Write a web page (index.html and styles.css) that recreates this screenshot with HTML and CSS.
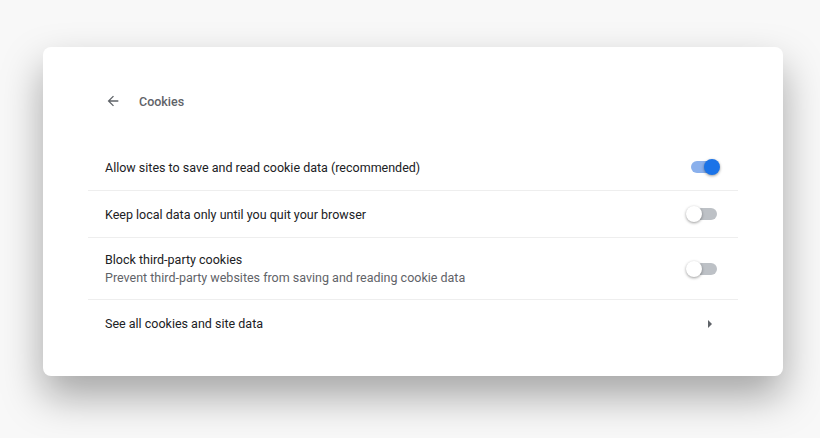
FILE: index.html
```html
<!DOCTYPE html>
<html lang="en">
<head>
    <meta charset="UTF-8">
    <title>Cookies</title>
    <link rel="stylesheet" href="styles.css">
</head>
<body>
<div class="card">
    <!--header-->
    <div class="page-title">
        <svg class="back" width="16" height="16" viewBox="0 0 24 24">
            <path d="M20 11H7.83l5.59-5.59L12 4l-8 8 8 8 1.41-1.41L7.83 13H20v-2z" fill="#5f6368"/>
        </svg>
        <span>Cookies</span>
    </div>
    <div class="settings">
        <div class="row">
            <div class="label">Allow sites to save and read cookie data (recommended)</div>
            <div class="toggle on"><span class="knob"></span></div>
        </div>
        <div class="row">
            <div class="label">Keep local data only until you quit your browser</div>
            <div class="toggle"><span class="knob"></span></div>
        </div>
        <div class="row tall">
            <div class="label">
                Block third-party cookies
                <div class="sub">Prevent third-party websites from saving and reading cookie data</div>
            </div>
            <div class="toggle"><span class="knob"></span></div>
        </div>
        <div class="row">
            <div class="label">See all cookies and site data</div>
            <span class="arrow"></span>
        </div>
    </div>
</div>
</body>
</html>
```

FILE: styles.css
```css
html {
    height: 100%;
}

body {
    margin: 0;
    min-height: 100%;
    box-sizing: border-box;
    padding: 47px 37px 62px 43px;
    background-color: #f8f8f8;
    font-family: Roboto, "Liberation Sans", sans-serif;
    font-size: 12.5px;
    color: #202124;
}

.card {
    width: 740px;
    height: 329px;
    box-sizing: border-box;
    background-color: white;
    border-radius: 8px;
    box-shadow: 0 20px 40px rgba(0, 0, 0, 0.34);
    padding: 44px 45px 0 45px;
}

.page-title {
    display: flex;
    align-items: center;
    height: 20px;
    padding-left: 17px;
    font-size: 12.5px;
    font-weight: 500;
    color: #5f6368;
}

.back {
    margin-right: 18px;
}

.settings {
    margin-top: 33px;
}

.row {
    display: flex;
    align-items: center;
    justify-content: space-between;
    box-sizing: border-box;
    height: 47px;
    padding: 0 18px 0 17px;
    border-bottom: 1px solid #eeeeee;
}

.row:last-child {
    border-bottom: none;
}

.row.tall {
    height: 62px;
}

.sub {
    margin-top: 3px;
    color: #5f6368;
}

.toggle {
    position: relative;
    width: 26px;
    height: 12px;
    border-radius: 6px;
    background-color: #bdc1c6;
    margin-right: 3px;
}

.knob {
    position: absolute;
    top: -2px;
    left: -5px;
    width: 16px;
    height: 16px;
    border-radius: 50%;
    background-color: white;
    box-shadow: 0 1px 3px rgba(0, 0, 0, 0.4);
}

.toggle.on {
    background-color: #8ab0ec;
}

.toggle.on .knob {
    left: 13px;
    background-color: #1a73e8;
}

.arrow {
    width: 0;
    height: 0;
    border-top: 4px solid transparent;
    border-bottom: 4px solid transparent;
    border-left: 4px solid #5f6368;
    margin-right: 8px;
}
```
